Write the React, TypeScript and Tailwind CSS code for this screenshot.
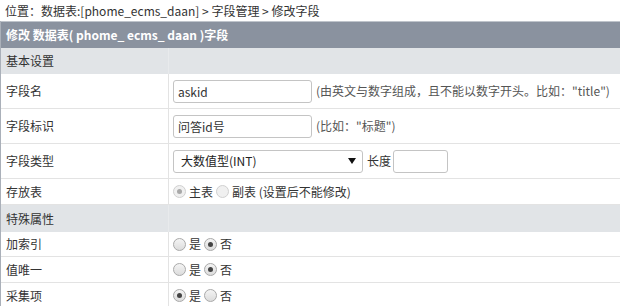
import React from "react";

const font = { fontFamily: '"Microsoft YaHei", "Noto Sans CJK SC", "Noto Sans", sans-serif' };

const Radio = ({ checked, disabled }: { checked?: boolean; disabled?: boolean }) => (
  <span
    className={
      "inline-flex items-center justify-center w-[13px] h-[13px] rounded-full border mr-[3px] " +
      (disabled ? "border-[#d0d0d0] bg-[#f0f0f0]" : "border-[#a9a9a9] bg-gradient-to-b from-[#f4f4f4] to-[#dcdcdc]")
    }
  >
    {checked && (
      <span className={"w-[5px] h-[5px] rounded-full " + (disabled ? "bg-[#a8a8a8]" : "bg-[#444]")} />
    )}
  </span>
);

const Row = ({ label, h, children }: { label: string; h: string; children?: React.ReactNode }) => (
  <div className={"grid grid-cols-[168px_1fr] border-b border-[#e3e3e3] " + h}>
    <div className="flex items-center pl-[5px] border-r border-[#e3e3e3]">{label}</div>
    <div className="flex items-center pl-[4px]">{children}</div>
  </div>
);

const Section = ({ label, h }: { label: string; h: string }) => (
  <div className={"grid grid-cols-[168px_1fr] bg-[#e1e4e7] " + h}>
    <div className="flex items-center pl-[5px] border-r border-[#e8eaec]">{label}</div>
    <div />
  </div>
);

const YesNo = ({ yes }: { yes?: boolean }) => (
  <span className="flex items-center">
    <Radio checked={yes} />
    <span className="mr-[3px]">是</span>
    <Radio checked={!yes} />
    <span>否</span>
  </span>
);

export default function App() {
  return (
    <div className="w-[620px] h-[306px] overflow-hidden bg-white text-[12px] text-[#333]" style={font}>
      <div className="h-[21px] flex items-center pl-[5px] text-[#333]">
        位置：数据表:[phome_ecms_daan] &gt; 字段管理 &gt; 修改字段
      </div>
      <div className="border-l border-[#aab0b9]">
        <div className="h-[27px] bg-[#8a929f] border-t border-[#bfc4cb] flex items-center pl-[5px] text-white font-bold">
          修改 数据表( phome_ ecms_ daan )字段
        </div>
        <Section label="基本设置" h="h-[26px]" />
        <Row label="字段名" h="h-[35px]">
          <input
            readOnly
            value="askid"
            className="w-[139px] h-[23px] border border-[#c4c4c4] rounded-[3px] px-[4px] text-[12px] text-[#333] outline-none"
            style={font}
          />
          <span className="ml-[4px] text-[#555]">(由英文与数字组成，且不能以数字开头。比如："title")</span>
        </Row>
        <Row label="字段标识" h="h-[35px]">
          <input
            readOnly
            value="问答id号"
            className="w-[139px] h-[23px] border border-[#c4c4c4] rounded-[3px] px-[4px] text-[12px] text-[#333] outline-none"
            style={font}
          />
          <span className="ml-[4px] text-[#555]">(比如："标题")</span>
        </Row>
        <Row label="字段类型" h="h-[35px]">
          <div className="w-[190px] h-[23px] border border-[#c4c4c4] rounded-[3px] flex items-center justify-between pl-[7px] pr-[6px] text-[#222]">
            <span>大数值型(INT)</span>
            <svg width="8" height="6" viewBox="0 0 8 6">
              <path d="M0 0h8L4 6z" fill="#111" />
            </svg>
          </div>
          <span className="ml-[4px]">长度</span>
          <div className="ml-[2px] w-[55px] h-[23px] border border-[#c4c4c4] rounded-[3px]" />
        </Row>
        <Row label="存放表" h="h-[26px]">
          <span className="flex items-center">
            <Radio checked disabled />
            <span className="mr-[3px]">主表</span>
            <Radio disabled />
            <span>副表 (设置后不能修改)</span>
          </span>
        </Row>
        <Section label="特殊属性" h="h-[27px]" />
        <Row label="加索引" h="h-[25px]">
          <YesNo />
        </Row>
        <Row label="值唯一" h="h-[26px]">
          <YesNo />
        </Row>
        <Row label="采集项" h="h-[26px]">
          <YesNo yes />
        </Row>
      </div>
    </div>
  );
}
